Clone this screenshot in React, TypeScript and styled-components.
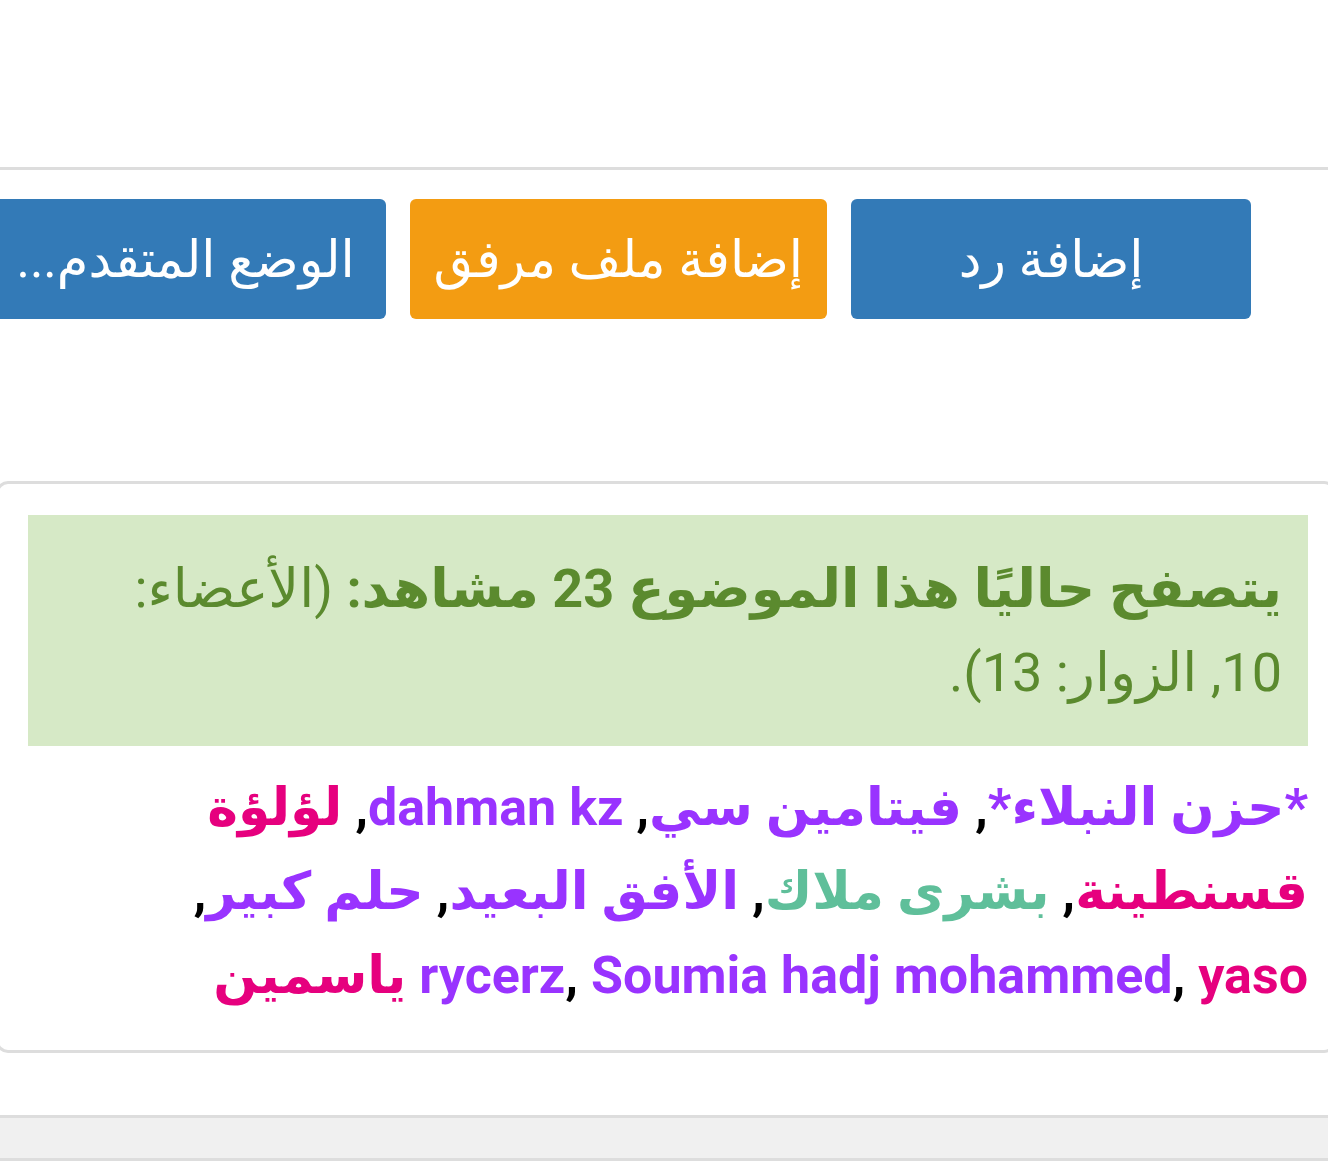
import React from 'react';
import styled, { createGlobalStyle } from 'styled-components';

const GlobalStyle = createGlobalStyle`
  html, body {
    margin: 0;
    padding: 0;
    background: #ffffff;
    font-family: Roboto, "DejaVu Sans", "Noto Sans", sans-serif;
    overflow-x: hidden;
  }
`;

// --- Layout ---

const Page = styled.div`
  width: 1328px;
  overflow: hidden;
  direction: rtl;
`;

const TopSpace = styled.div`
  height: 167px;
  border-bottom: 3px solid #dddddd;
`;

const ButtonRow = styled.div`
  display: flex;
  gap: 24px;
  padding: 29px 77px 0 0;
  overflow: hidden;
`;

const ActionButton = styled.button<{ $variant: 'primary' | 'warning' }>`
  flex-shrink: 0;
  min-width: 400px;
  height: 120px;
  padding: 0 24px;
  border: none;
  border-radius: 6px;
  background: ${p => (p.$variant === 'warning' ? '#f39c12' : '#337ab7')};
  color: #ffffff;
  font-family: Roboto, "DejaVu Sans", sans-serif;
  font-size: 51px;
  white-space: nowrap;
  direction: rtl;
`;

const Card = styled.div`
  margin: 162px -8px 0 -4px;
  border: 3px solid #dddddd;
  border-radius: 12px;
  padding: 31px 25px 32px 29px;
  background: #ffffff;
`;

const Alert = styled.div`
  background: #d6e9c6;
  color: #5b8a2e;
  padding: 32px 26px 31px;
  font-size: 54px;
  line-height: 84px;
  text-align: right;
`;

const Strong = styled.b`
  font-weight: 700;
`;

const Names = styled.div`
  margin-top: 20px;
  font-size: 52px;
  line-height: 84px;
  font-weight: 700;
  text-align: right;
  color: #000000;
`;

const Name = styled.span<{ $color: string }>`
  color: ${p => p.$color};
`;

const Footer = styled.div`
  margin-top: 62px;
  height: 40px;
  background: #f0f0f0;
  border-top: 3px solid #dddddd;
  border-bottom: 3px solid #dddddd;
`;

const PURPLE = '#9933ff';
const PINK = '#e6007e';
const GREEN = '#5fbf9a';

// sep = what follows the name in the list
const users: { name: string; color: string; sep: string }[] = [
  { name: '*حزن النبلاء*', color: PURPLE, sep: ', ' },
  { name: 'فيتامين سي', color: PURPLE, sep: ', ' },
  { name: 'dahman kz', color: PURPLE, sep: ', ' },
  { name: 'لؤلؤة قسنطينة', color: PINK, sep: ', ' },
  { name: 'بشرى ملاك', color: GREEN, sep: ', ' },
  { name: 'الأفق البعيد', color: PURPLE, sep: ', ' },
  { name: 'حلم كبير', color: PURPLE, sep: ', ' },
  { name: 'rycerz', color: PURPLE, sep: ', ' },
  { name: 'Soumia hadj mohammed', color: PURPLE, sep: ', ' },
  { name: 'yaso', color: PINK, sep: ' ' },
  { name: 'ياسمين', color: PINK, sep: '' },
];

export default function App() {
  return (
    <>
      <GlobalStyle />
      <Page>
        <TopSpace />
        <ButtonRow>
          <ActionButton $variant="primary">إضافة رد</ActionButton>
          <ActionButton $variant="warning">إضافة ملف مرفق</ActionButton>
          <ActionButton $variant="primary">الوضع المتقدم...</ActionButton>
        </ButtonRow>
        <Card>
          <Alert>
            <Strong>يتصفح حاليًا هذا الموضوع 23 مشاهد: </Strong>
            (الأعضاء: 10, الزوار: 13).
          </Alert>
          <Names>
            {users.map(u => (
              <React.Fragment key={u.name}>
                <Name $color={u.color}>{u.name}</Name>
                {u.sep}
              </React.Fragment>
            ))}
          </Names>
        </Card>
        <Footer />
      </Page>
    </>
  );
}
